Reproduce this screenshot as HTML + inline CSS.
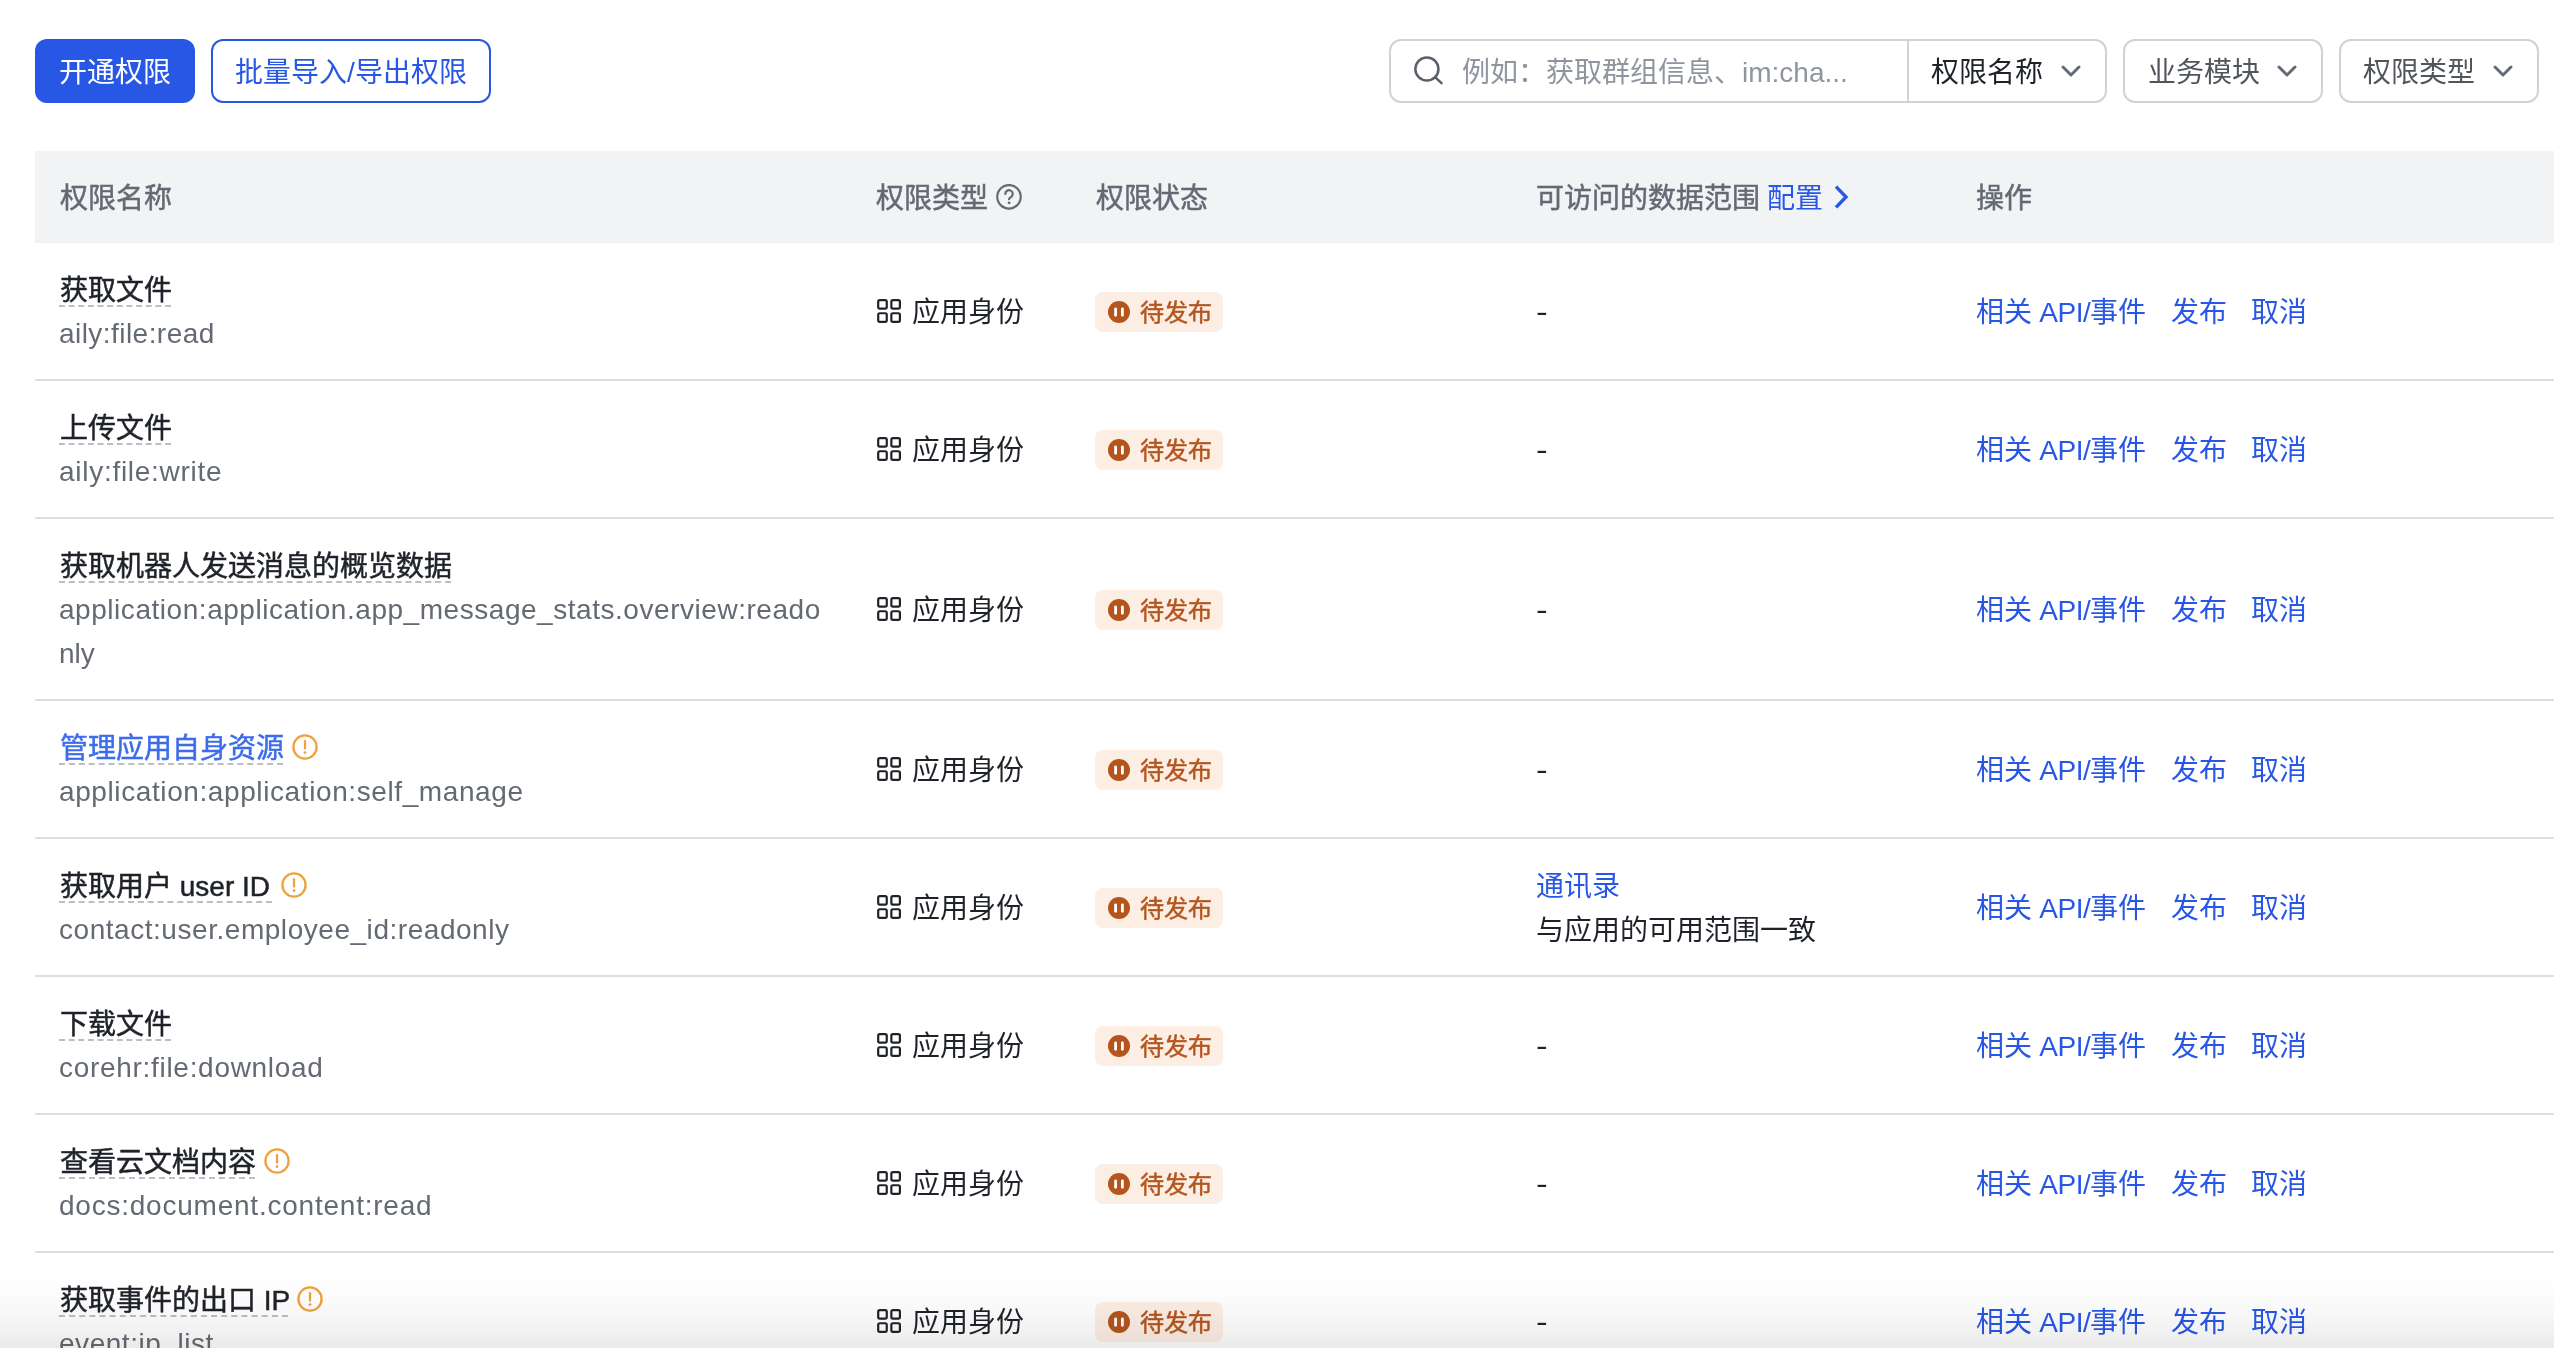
<!DOCTYPE html>
<html lang="zh-CN">
<head>
<meta charset="utf-8">
<title>权限管理</title>
<style>
*{box-sizing:border-box;margin:0;padding:0}
html,body{width:2554px;height:1348px;overflow:hidden;background:#fff}
body{position:relative;will-change:transform;font-family:"Liberation Sans",sans-serif;font-size:28px;line-height:44px;color:#1f2329}
a{color:#2857e6;text-decoration:none}
.abs{position:absolute}
.nw{white-space:nowrap}
.m{-webkit-text-stroke:.5px currentColor}

/* toolbar */
.btn{position:absolute;top:39px;height:64px;border-radius:12px;font-size:28px;text-align:center;white-space:nowrap;overflow:hidden}
.btn.primary{left:35px;width:160px;background:#2857e6;color:#fff;line-height:64px;padding-top:2px}
.btn.ghost{left:211px;width:280px;border:2px solid #2857e6;color:#2857e6;background:#fff;line-height:60px;padding-top:2px}
.box{position:absolute;top:39px;height:64px;border:2px solid #d0d3d6;border-radius:12px;background:#fff}
.box .t{position:absolute;top:10px;line-height:44px;white-space:nowrap}
.chev{position:absolute;top:23px;width:22px;height:14px}
.search-ico{position:absolute;left:22px;top:14px;width:30px;height:30px}

/* table */
.thead{position:absolute;left:35px;top:151px;width:2519px;height:92px;background:#f2f3f5;color:#646a73}
.thead .c{position:absolute;top:26px;line-height:44px;white-space:nowrap}
.row{position:absolute;left:35px;width:2519px;border-bottom:2px solid #dddedf}
.row .c{position:absolute;white-space:nowrap}
.c1{left:25px;top:24px;width:790px}
.c2{left:841px}
.c3{left:1060px}
.c4{left:1501px}
.c5{left:1941px}
.tl{position:relative;height:44px;white-space:nowrap}
.title{position:absolute;left:0;top:2px;height:44px;line-height:44px;color:#1f2329;white-space:nowrap;overflow:visible}
.title.link{color:#3c6ceb}
.ul{position:absolute;left:-1px;top:38px;height:0;border-top:2px dashed #bbbfc4}
.sub{display:block;position:relative;top:1px;left:-1px;color:#646a73;line-height:44px;white-space:nowrap}
.warn{position:absolute;top:9px;width:26px;height:26px}
.grid{position:absolute;left:1px;top:8px;width:24px;height:24px}
.c2 span{margin-left:36px}
.tag{display:block;height:40px;width:128px;border-radius:8px;background:#fdeee4;color:#b4551e;font-size:24px;line-height:40px;position:relative}
.tag svg{position:absolute;left:13px;top:9px;width:22px;height:22px}
.tag span{position:absolute;left:45px;top:1px}
.ops a{position:absolute;top:0}
.api{letter-spacing:-.5px}
.dash{display:inline-block;transform:scaleX(1.25);transform-origin:0 50%}
.fade{position:absolute;left:0;top:1258px;width:2554px;height:90px;background:linear-gradient(to bottom,rgba(0,0,0,0) 0,rgba(0,0,0,.008) 35%,rgba(0,0,0,.026) 58%,rgba(0,0,0,.05) 80%,rgba(0,0,0,.082) 100%);pointer-events:none}
</style>
</head>
<body>

<!-- toolbar -->
<div class="btn primary">开通权限</div>
<div class="btn ghost">批量导入/导出权限</div>

<div class="box" style="left:1389px;width:718px">
  <svg class="search-ico" viewBox="0 0 30 30" fill="none" stroke="#5a606b" stroke-width="2.5" stroke-linecap="round"><circle cx="13.9" cy="14" r="11.55"/><path d="M22.1 22.2 L28.5 28.2"/></svg>
  <span class="t" style="left:71px;color:#8f959e">例如：获取群组信息、im:cha...</span>
  <div class="abs" style="left:516px;top:0;width:2px;height:60px;background:#d0d3d6"></div>
  <span class="t" style="left:540px;color:#1f2329">权限名称</span>
  <svg class="chev" style="left:668.8px" viewBox="0 0 22 14" fill="none" stroke="#646a73" stroke-width="3" stroke-linecap="round" stroke-linejoin="round"><path d="M3 3 L11 11 L19 3"/></svg>
</div>
<div class="box" style="left:2123px;width:200px">
  <span class="t" style="left:23px;color:#51565d">业务模块</span>
  <svg class="chev" style="left:150.9px" viewBox="0 0 22 14" fill="none" stroke="#646a73" stroke-width="3" stroke-linecap="round" stroke-linejoin="round"><path d="M3 3 L11 11 L19 3"/></svg>
</div>
<div class="box" style="left:2339px;width:200px">
  <span class="t" style="left:22px;color:#51565d">权限类型</span>
  <svg class="chev" style="left:150.9px" viewBox="0 0 22 14" fill="none" stroke="#646a73" stroke-width="3" stroke-linecap="round" stroke-linejoin="round"><path d="M3 3 L11 11 L19 3"/></svg>
</div>

<!-- table header -->
<div class="thead">
  <span class="c m" style="left:25px">权限名称</span>
  <span class="c m" style="left:841px">权限类型</span>
  <svg class="abs" style="left:961px;top:33px;width:26px;height:26px" viewBox="0 0 26 26" fill="none" stroke="#646a73" stroke-width="2.2"><circle cx="13" cy="12.8" r="11.75"/><path d="M9.3 9.9 a3.7 3.7 0 1 1 5.9 3 c-1.3 .9 -2.2 1.4 -2.2 2.3" stroke-linecap="round"/><circle cx="13.1" cy="18.8" r="1.4" fill="#646a73" stroke="none"/></svg>
  <span class="c m" style="left:1061px">权限状态</span>
  <span class="c" style="left:1501px"><span class="m">可访问的数据范围</span> <a style="margin-left:-1px">配置</a></span>
  <svg class="abs" style="left:1798px;top:33px;width:18px;height:26px" viewBox="0 0 18 26" fill="none" stroke="#2857e6" stroke-width="3.4" stroke-linecap="square" stroke-linejoin="miter"><path d="M4.2 3.9 L13 13 L4.2 22.1"/></svg>
  <span class="c m" style="left:1941px">操作</span>
</div>

<!-- rows inserted below -->
<div id="rows">
<div class="row" style="top:243px;height:138px">
  <div class="c c1"><div class="tl"><span class="title m" style="width:112px">获取文件</span><i class="ul" style="width:112px"></i></div><span class="sub" style="letter-spacing:0.45px">aily:file:read</span></div>
  <div class="c c2" style="top:48px"><svg class="grid" viewBox="0 0 24 24" fill="none" stroke="#1f2329" stroke-width="2.2"><rect x="1.2" y="1.1" width="8.55" height="8.55" rx="1.6"/><rect x="14.35" y="1.1" width="8.55" height="8.55" rx="1.6"/><rect x="1.2" y="14.25" width="8.55" height="8.55" rx="1.6"/><rect x="14.35" y="14.25" width="8.55" height="8.55" rx="1.6"/></svg><span>应用身份</span></div>
  <div class="c c3" style="top:49px"><div class="tag"><svg viewBox="0 0 22 22"><circle cx="11" cy="11" r="11" fill="#b4551e"/><rect x="6.2" y="6.4" width="2.8" height="9.3" rx="1.4" fill="#fff"/><rect x="13" y="6.4" width="2.8" height="9.3" rx="1.4" fill="#fff"/></svg><span class="m">待发布</span></div></div>
  <div class="c c4" style="top:47px"><span class="dash">-</span></div>
  <div class="c c5 ops" style="top:48px"><a style="left:0">相关<span class="api"> API/</span>事件</a><a style="left:195px">发布</a><a style="left:275px">取消</a></div>
</div>
<div class="row" style="top:381px;height:138px">
  <div class="c c1"><div class="tl"><span class="title m" style="width:112px">上传文件</span><i class="ul" style="width:112px"></i></div><span class="sub" style="letter-spacing:0.72px">aily:file:write</span></div>
  <div class="c c2" style="top:48px"><svg class="grid" viewBox="0 0 24 24" fill="none" stroke="#1f2329" stroke-width="2.2"><rect x="1.2" y="1.1" width="8.55" height="8.55" rx="1.6"/><rect x="14.35" y="1.1" width="8.55" height="8.55" rx="1.6"/><rect x="1.2" y="14.25" width="8.55" height="8.55" rx="1.6"/><rect x="14.35" y="14.25" width="8.55" height="8.55" rx="1.6"/></svg><span>应用身份</span></div>
  <div class="c c3" style="top:49px"><div class="tag"><svg viewBox="0 0 22 22"><circle cx="11" cy="11" r="11" fill="#b4551e"/><rect x="6.2" y="6.4" width="2.8" height="9.3" rx="1.4" fill="#fff"/><rect x="13" y="6.4" width="2.8" height="9.3" rx="1.4" fill="#fff"/></svg><span class="m">待发布</span></div></div>
  <div class="c c4" style="top:47px"><span class="dash">-</span></div>
  <div class="c c5 ops" style="top:48px"><a style="left:0">相关<span class="api"> API/</span>事件</a><a style="left:195px">发布</a><a style="left:275px">取消</a></div>
</div>
<div class="row" style="top:519px;height:182px">
  <div class="c c1"><div class="tl"><span class="title m" style="width:392px">获取机器人发送消息的概览数据</span><i class="ul" style="width:392px"></i></div><span class="sub" style="letter-spacing:0.54px">application:application.app_message_stats.overview:reado</span><span class="sub" style="letter-spacing:0px">nly</span></div>
  <div class="c c2" style="top:70px"><svg class="grid" viewBox="0 0 24 24" fill="none" stroke="#1f2329" stroke-width="2.2"><rect x="1.2" y="1.1" width="8.55" height="8.55" rx="1.6"/><rect x="14.35" y="1.1" width="8.55" height="8.55" rx="1.6"/><rect x="1.2" y="14.25" width="8.55" height="8.55" rx="1.6"/><rect x="14.35" y="14.25" width="8.55" height="8.55" rx="1.6"/></svg><span>应用身份</span></div>
  <div class="c c3" style="top:71px"><div class="tag"><svg viewBox="0 0 22 22"><circle cx="11" cy="11" r="11" fill="#b4551e"/><rect x="6.2" y="6.4" width="2.8" height="9.3" rx="1.4" fill="#fff"/><rect x="13" y="6.4" width="2.8" height="9.3" rx="1.4" fill="#fff"/></svg><span class="m">待发布</span></div></div>
  <div class="c c4" style="top:69px"><span class="dash">-</span></div>
  <div class="c c5 ops" style="top:70px"><a style="left:0">相关<span class="api"> API/</span>事件</a><a style="left:195px">发布</a><a style="left:275px">取消</a></div>
</div>
<div class="row" style="top:701px;height:138px">
  <div class="c c1"><div class="tl"><span class="title m link" style="width:224px">管理应用自身资源</span><i class="ul" style="width:224px"></i><svg class="warn" style="left:232px" viewBox="0 0 26 26" fill="none" stroke="#f0a03c" stroke-width="2.3"><circle cx="13" cy="13" r="11.6"/><path d="M13 7.2 V14.6" stroke-linecap="round"/><circle cx="13" cy="18.6" r="1.4" fill="#f0a03c" stroke="none"/></svg></div><span class="sub" style="letter-spacing:0.6px">application:application:self_manage</span></div>
  <div class="c c2" style="top:48px"><svg class="grid" viewBox="0 0 24 24" fill="none" stroke="#1f2329" stroke-width="2.2"><rect x="1.2" y="1.1" width="8.55" height="8.55" rx="1.6"/><rect x="14.35" y="1.1" width="8.55" height="8.55" rx="1.6"/><rect x="1.2" y="14.25" width="8.55" height="8.55" rx="1.6"/><rect x="14.35" y="14.25" width="8.55" height="8.55" rx="1.6"/></svg><span>应用身份</span></div>
  <div class="c c3" style="top:49px"><div class="tag"><svg viewBox="0 0 22 22"><circle cx="11" cy="11" r="11" fill="#b4551e"/><rect x="6.2" y="6.4" width="2.8" height="9.3" rx="1.4" fill="#fff"/><rect x="13" y="6.4" width="2.8" height="9.3" rx="1.4" fill="#fff"/></svg><span class="m">待发布</span></div></div>
  <div class="c c4" style="top:47px"><span class="dash">-</span></div>
  <div class="c c5 ops" style="top:48px"><a style="left:0">相关<span class="api"> API/</span>事件</a><a style="left:195px">发布</a><a style="left:275px">取消</a></div>
</div>
<div class="row" style="top:839px;height:138px">
  <div class="c c1"><div class="tl"><span class="title m" style="width:213px">获取用户 user ID</span><i class="ul" style="width:213px"></i><svg class="warn" style="left:221px" viewBox="0 0 26 26" fill="none" stroke="#f0a03c" stroke-width="2.3"><circle cx="13" cy="13" r="11.6"/><path d="M13 7.2 V14.6" stroke-linecap="round"/><circle cx="13" cy="18.6" r="1.4" fill="#f0a03c" stroke="none"/></svg></div><span class="sub" style="letter-spacing:0.54px">contact:user.employee_id:readonly</span></div>
  <div class="c c2" style="top:48px"><svg class="grid" viewBox="0 0 24 24" fill="none" stroke="#1f2329" stroke-width="2.2"><rect x="1.2" y="1.1" width="8.55" height="8.55" rx="1.6"/><rect x="14.35" y="1.1" width="8.55" height="8.55" rx="1.6"/><rect x="1.2" y="14.25" width="8.55" height="8.55" rx="1.6"/><rect x="14.35" y="14.25" width="8.55" height="8.55" rx="1.6"/></svg><span>应用身份</span></div>
  <div class="c c3" style="top:49px"><div class="tag"><svg viewBox="0 0 22 22"><circle cx="11" cy="11" r="11" fill="#b4551e"/><rect x="6.2" y="6.4" width="2.8" height="9.3" rx="1.4" fill="#fff"/><rect x="13" y="6.4" width="2.8" height="9.3" rx="1.4" fill="#fff"/></svg><span class="m">待发布</span></div></div>
  <div class="c c4" style="top:26px"><a>通讯录</a><br>与应用的可用范围一致</div>
  <div class="c c5 ops" style="top:48px"><a style="left:0">相关<span class="api"> API/</span>事件</a><a style="left:195px">发布</a><a style="left:275px">取消</a></div>
</div>
<div class="row" style="top:977px;height:138px">
  <div class="c c1"><div class="tl"><span class="title m" style="width:112px">下载文件</span><i class="ul" style="width:112px"></i></div><span class="sub" style="letter-spacing:0.7px">corehr:file:download</span></div>
  <div class="c c2" style="top:48px"><svg class="grid" viewBox="0 0 24 24" fill="none" stroke="#1f2329" stroke-width="2.2"><rect x="1.2" y="1.1" width="8.55" height="8.55" rx="1.6"/><rect x="14.35" y="1.1" width="8.55" height="8.55" rx="1.6"/><rect x="1.2" y="14.25" width="8.55" height="8.55" rx="1.6"/><rect x="14.35" y="14.25" width="8.55" height="8.55" rx="1.6"/></svg><span>应用身份</span></div>
  <div class="c c3" style="top:49px"><div class="tag"><svg viewBox="0 0 22 22"><circle cx="11" cy="11" r="11" fill="#b4551e"/><rect x="6.2" y="6.4" width="2.8" height="9.3" rx="1.4" fill="#fff"/><rect x="13" y="6.4" width="2.8" height="9.3" rx="1.4" fill="#fff"/></svg><span class="m">待发布</span></div></div>
  <div class="c c4" style="top:47px"><span class="dash">-</span></div>
  <div class="c c5 ops" style="top:48px"><a style="left:0">相关<span class="api"> API/</span>事件</a><a style="left:195px">发布</a><a style="left:275px">取消</a></div>
</div>
<div class="row" style="top:1115px;height:138px">
  <div class="c c1"><div class="tl"><span class="title m" style="width:196px">查看云文档内容</span><i class="ul" style="width:196px"></i><svg class="warn" style="left:204px" viewBox="0 0 26 26" fill="none" stroke="#f0a03c" stroke-width="2.3"><circle cx="13" cy="13" r="11.6"/><path d="M13 7.2 V14.6" stroke-linecap="round"/><circle cx="13" cy="18.6" r="1.4" fill="#f0a03c" stroke="none"/></svg></div><span class="sub" style="letter-spacing:0.77px">docs:document.content:read</span></div>
  <div class="c c2" style="top:48px"><svg class="grid" viewBox="0 0 24 24" fill="none" stroke="#1f2329" stroke-width="2.2"><rect x="1.2" y="1.1" width="8.55" height="8.55" rx="1.6"/><rect x="14.35" y="1.1" width="8.55" height="8.55" rx="1.6"/><rect x="1.2" y="14.25" width="8.55" height="8.55" rx="1.6"/><rect x="14.35" y="14.25" width="8.55" height="8.55" rx="1.6"/></svg><span>应用身份</span></div>
  <div class="c c3" style="top:49px"><div class="tag"><svg viewBox="0 0 22 22"><circle cx="11" cy="11" r="11" fill="#b4551e"/><rect x="6.2" y="6.4" width="2.8" height="9.3" rx="1.4" fill="#fff"/><rect x="13" y="6.4" width="2.8" height="9.3" rx="1.4" fill="#fff"/></svg><span class="m">待发布</span></div></div>
  <div class="c c4" style="top:47px"><span class="dash">-</span></div>
  <div class="c c5 ops" style="top:48px"><a style="left:0">相关<span class="api"> API/</span>事件</a><a style="left:195px">发布</a><a style="left:275px">取消</a></div>
</div>
<div class="row" style="top:1253px;height:138px">
  <div class="c c1"><div class="tl"><span class="title m" style="width:229px">获取事件的出口 IP</span><i class="ul" style="width:229px"></i><svg class="warn" style="left:237px" viewBox="0 0 26 26" fill="none" stroke="#f0a03c" stroke-width="2.3"><circle cx="13" cy="13" r="11.6"/><path d="M13 7.2 V14.6" stroke-linecap="round"/><circle cx="13" cy="18.6" r="1.4" fill="#f0a03c" stroke="none"/></svg></div><span class="sub" style="letter-spacing:0.53px">event:ip_list</span></div>
  <div class="c c2" style="top:48px"><svg class="grid" viewBox="0 0 24 24" fill="none" stroke="#1f2329" stroke-width="2.2"><rect x="1.2" y="1.1" width="8.55" height="8.55" rx="1.6"/><rect x="14.35" y="1.1" width="8.55" height="8.55" rx="1.6"/><rect x="1.2" y="14.25" width="8.55" height="8.55" rx="1.6"/><rect x="14.35" y="14.25" width="8.55" height="8.55" rx="1.6"/></svg><span>应用身份</span></div>
  <div class="c c3" style="top:49px"><div class="tag"><svg viewBox="0 0 22 22"><circle cx="11" cy="11" r="11" fill="#b4551e"/><rect x="6.2" y="6.4" width="2.8" height="9.3" rx="1.4" fill="#fff"/><rect x="13" y="6.4" width="2.8" height="9.3" rx="1.4" fill="#fff"/></svg><span class="m">待发布</span></div></div>
  <div class="c c4" style="top:47px"><span class="dash">-</span></div>
  <div class="c c5 ops" style="top:48px"><a style="left:0">相关<span class="api"> API/</span>事件</a><a style="left:195px">发布</a><a style="left:275px">取消</a></div>
</div>
</div>

<div class="fade"></div>
</body>
</html>
